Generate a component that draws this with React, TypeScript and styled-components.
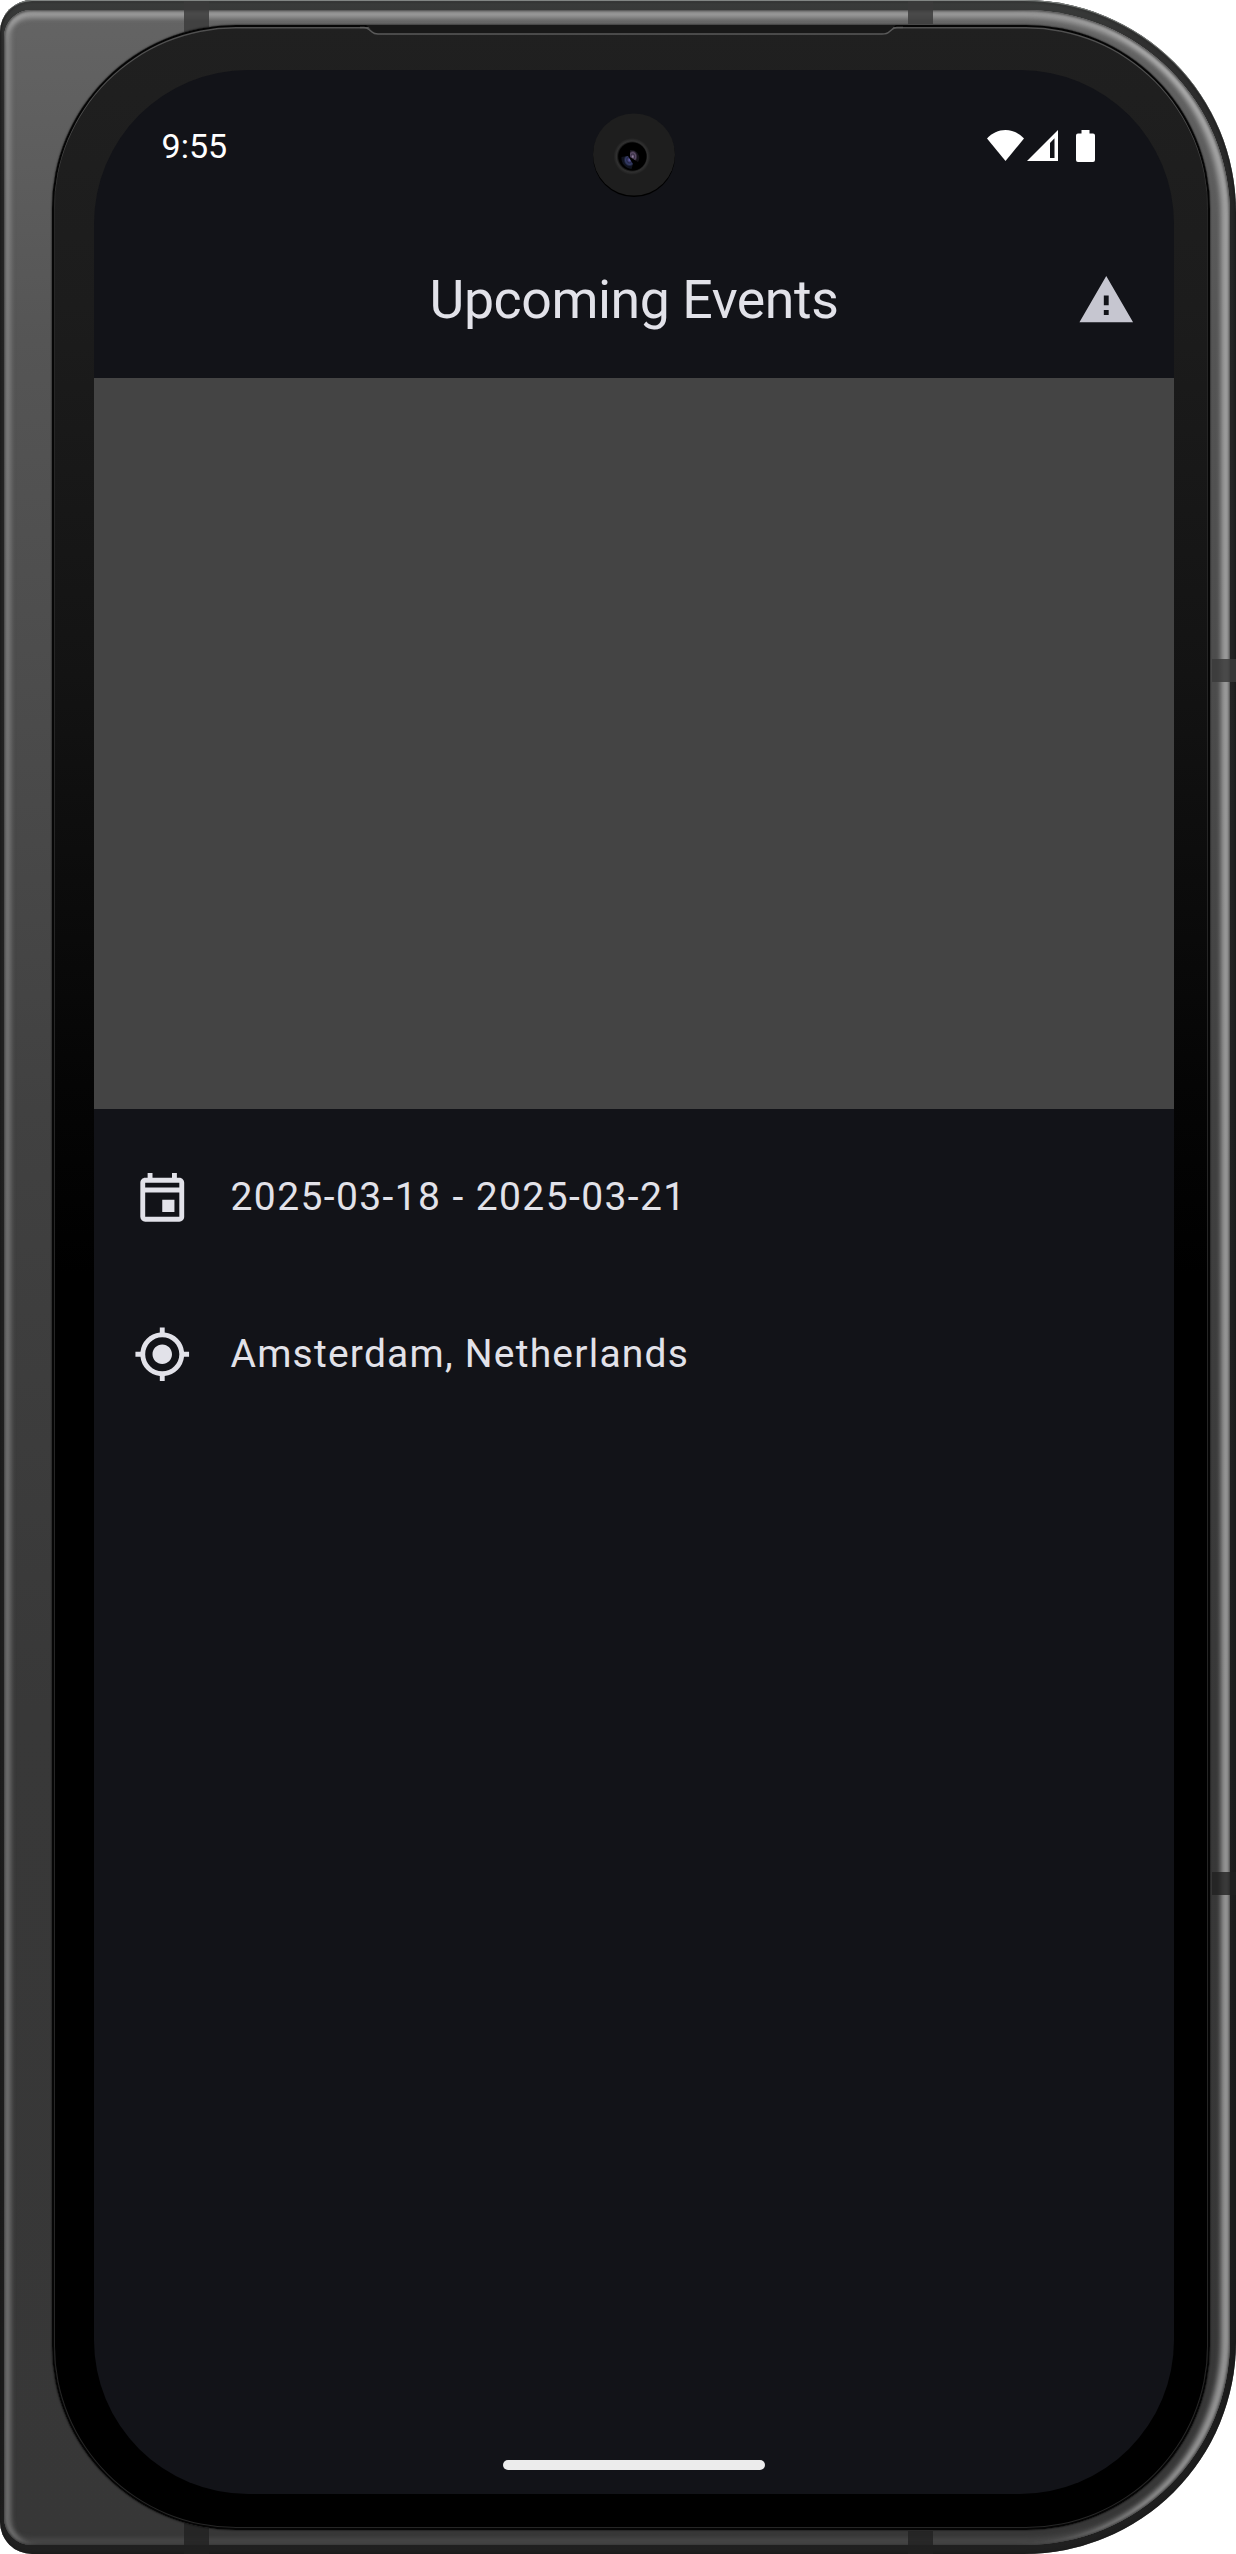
import React from "react";
import styled, { createGlobalStyle } from "styled-components";
import { MdMyLocation, MdOutlineEvent, MdWarning } from "react-icons/md";

const GlobalStyle = createGlobalStyle`
  *, *::before, *::after { box-sizing: border-box; }
  body { margin: 0; background: #fff; font-family: Roboto, "Liberation Sans", sans-serif; }
`;

const Shell = styled.div`
  position: relative;
  width: 1236px;
  height: 2554px;
  padding: 10px 6px 9px 4px;
  border-radius: 32px 212px 212px 32px;
  overflow: hidden;
  background: linear-gradient(#3a3c3b 0, #303030 40px, #262626 200px, #1c1c1c 2400px, #202020 100%);
  box-shadow: inset 0 2px 1px -1px #8c918e, inset 0 0 3px 1px #1a1a1a;
`;

const Rim = styled.div`
  height: 100%;
  padding: 15px 20px 15px 48px;
  border-radius: 27px 205px 205px 27px;
  background: linear-gradient(#646464 0, #555 330px, #414141 1100px, #383838 1700px, #373737 100%);
  box-shadow:
    inset 0 0 3px 1px rgba(34, 34, 34, 0.8),
    inset 9px 0 5px -2px rgba(170, 170, 170, 0.48),
    inset -11px 0 5px -2px rgba(190, 190, 190, 0.7),
    inset 0 9px 5px -1px rgba(185, 185, 185, 0.65),
    inset 0 -9px 5px -2px rgba(120, 120, 120, 0.25);
`;

const Bezel = styled.div`
  position: relative;
  height: 100%;
  padding: 45px 36px 36px 42px;
  border-radius: 184px;
  background: linear-gradient(#202020 0, #1c1c1c 280px, #131313 650px, #050505 1060px, #000 1250px);
  box-shadow:
    0 0 2px 0 #000,
    inset 0 0 0 2px #050505,
    inset 0 1.5px 0 2px #505050,
    inset 0 0 0 3px #262626;
`;

const Screen = styled.main`
  position: relative;
  display: flex;
  flex-direction: column;
  height: 100%;
  border-radius: 154px;
  overflow: hidden;
  background: #121318;
  color: #e2e2e9;
`;

const StatusBar = styled.header`
  display: flex;
  flex: none;
  justify-content: space-between;
  height: 152px;
  padding: 54px 79px 0 67.5px;
  color: #fff;
`;

const Clock = styled.time`
  font-size: 34.1px;
  line-height: 44px;
`;

const StatusIcons = styled.div`
  display: flex;
  align-items: flex-start;
  padding-top: 6px;
  svg { display: block; }
`;

const TopBar = styled.div`
  display: grid;
  flex: none;
  grid-template-columns: 117px 1fr 117px;
  align-items: center;
  height: 156px;
  padding: 0 9px;
`;

const Title = styled.h1`
  grid-column: 2;
  margin: 0;
  text-align: center;
  font-size: 53.625px;
  font-weight: 400;
  line-height: 68px;
  letter-spacing: -0.43px;
`;

const WarningButton = styled.button`
  display: grid;
  place-items: center;
  justify-self: end;
  width: 117px;
  height: 117px;
  padding: 0;
  border: 0;
  background: none;
  color: #c6c6d0;
  font-size: 58.5px;
`;

const EventImage = styled.div`
  flex: none;
  height: 731px;
  background: #444;
`;

const Details = styled.ul`
  display: flex;
  flex-direction: column;
  gap: 20px;
  margin: 0;
  padding: 20px 39px;
  list-style: none;
`;

const DetailRow = styled.li<{ $tracking: number }>`
  display: flex;
  align-items: center;
  gap: 39px;
  height: 136.5px;
  font-size: 39px;
  line-height: 58.5px;
  letter-spacing: ${(p) => p.$tracking}px;
  svg { flex: none; width: 58.5px; height: 58.5px; }
`;

const HomeIndicator = styled.div`
  flex: none;
  align-self: center;
  width: 262px;
  height: 10px;
  margin: auto 0 24px;
  border-radius: 5px;
  background: #ececec;
`;

const Camera = styled.svg`
  position: absolute;
  top: 41px;
  left: 498px;
`;

const Speaker = styled.svg`
  position: absolute;
  top: -3px;
  left: 308px;
`;

const Antenna = styled.i<{ $x: number; $y: number; $w: number; $h: number; $dark?: boolean }>`
  position: absolute;
  left: ${(p) => p.$x}px;
  top: ${(p) => p.$y}px;
  width: ${(p) => p.$w}px;
  height: ${(p) => p.$h}px;
  background: ${(p) => (p.$dark ? "rgba(32,32,32,.78)" : "rgba(58,58,58,.84)")};
`;

const WifiIcon = () => (
  <svg width="37" height="32" viewBox="0 0 37 32" fill="currentColor">
    <path d="M0 8.5C5 3 11.500 0 18.500 0S32 3 37 8.500L18.500 31Z" />
  </svg>
);

const SignalSvg = styled.svg`
  margin-left: 3px;
`;

const BatterySvg = styled.svg`
  margin-left: 18px;
`;

const SignalIcon = () => (
  <SignalSvg width="31" height="32" viewBox="0 0 31 32" fill="currentColor">
    <path fillRule="evenodd" d="M31 0V31H0ZM27.500 8.300 23 13V28H27.500Z" />
  </SignalSvg>
);

const BatteryIcon = () => (
  <BatterySvg width="19" height="32" viewBox="0 0 19 32" fill="currentColor">
    <path d="M5.500 0h8v3.500H17a2 2 0 0 1 2 2V30a2 2 0 0 1-2 2H2a2 2 0 0 1-2-2V5.500a2 2 0 0 1 2-2h3.500Z" />
  </BatterySvg>
);

const CameraLens = () => (
  <Camera width="84" height="88" viewBox="0 0 84 88">
    <defs>
      <radialGradient id="ring">
        <stop offset="0.72" stopColor="#080808" />
        <stop offset="0.84" stopColor="#303030" />
        <stop offset="1" stopColor="#1e1e1e" />
      </radialGradient>
      <radialGradient id="violet" cx="0.3" cy="0.55">
        <stop offset="0" stopColor="#a08cae" />
        <stop offset="0.4" stopColor="#3a3046" />
        <stop offset="0.65" stopColor="#5d4d68" />
        <stop offset="1" stopColor="#15121a" />
      </radialGradient>
      <radialGradient id="indigo" cx="0.7" cy="0.3">
        <stop offset="0" stopColor="#6a67b0" />
        <stop offset="0.45" stopColor="#26284a" />
        <stop offset="0.7" stopColor="#343c66" />
        <stop offset="1" stopColor="#10131f" />
      </radialGradient>
    </defs>
    <circle cx="42" cy="45" r="41" fill="#000" />
    <circle cx="42" cy="43.500" r="41" fill="#1e1e1e" />
    <circle cx="40" cy="45.500" r="18.500" fill="url(#ring)" />
    <circle cx="40.500" cy="45.500" r="14" fill="#000" />
    <path d="M29.500 46a11 11 0 0 0 10 12l1.500-5-5-8Z" fill="url(#indigo)" />
    <path d="M38 39a8 8 0 0 1 8 12L38 46Z" fill="url(#violet)" />
  </Camera>
);

const SpeakerSlot = () => (
  <Speaker width="543" height="16" viewBox="0 0 543 16">
    <path d="M6 3 14 10Q17 12 21 12H520Q525 12 528 10L536 3Z" fill="#181818" />
    <path
      d="M0 5.500H4Q7 5.500 9 7.500L12 10Q14 12 18 12H522Q527 12 529 10L532 7.500Q534 5.500 537 5.500H543"
      fill="none"
      stroke="#5a5a5a"
      strokeWidth="1.500"
    />
  </Speaker>
);

export default function App() {
  return (
    <>
      <GlobalStyle />
      <Shell>
        <Antenna $x={184} $y={1} $w={25} $h={40} />
        <Antenna $x={184} $y={2515} $w={25} $h={39} $dark />
        <Rim>
          <Bezel>
            <SpeakerSlot />
            <Screen>
              <StatusBar>
                <Clock>9:55</Clock>
                <StatusIcons>
                  <WifiIcon />
                  <SignalIcon />
                  <BatteryIcon />
                </StatusIcons>
              </StatusBar>
              <CameraLens />
              <TopBar>
                <Title>Upcoming Events</Title>
                <WarningButton aria-label="Warning">
                  <MdWarning />
                </WarningButton>
              </TopBar>
              <EventImage />
              <Details>
                <DetailRow $tracking={1.4}>
                  <MdOutlineEvent />
                  2025-03-18 - 2025-03-21
                </DetailRow>
                <DetailRow $tracking={1.22}>
                  <MdMyLocation />
                  Amsterdam, Netherlands
                </DetailRow>
              </Details>
              <HomeIndicator />
            </Screen>
          </Bezel>
        </Rim>
        <Antenna $x={908} $y={1} $w={25} $h={23} />
        <Antenna $x={908} $y={2531} $w={25} $h={23} $dark />
        <Antenna $x={1212} $y={659} $w={24} $h={23} />
        <Antenna $x={1212} $y={1872} $w={24} $h={23} $dark />
      </Shell>
    </>
  );
}
